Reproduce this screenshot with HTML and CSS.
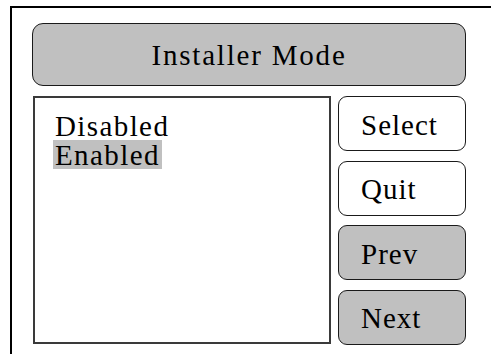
FILE: index.html
```html
<!DOCTYPE html>
<html>
<head>
<meta charset="utf-8">
<link rel="stylesheet" href="styles.css">
</head>
<body class="im-page">
<div class="im-frame">
  <div class="im-head">Installer Mode</div>
  <div class="im-row">
    <div class="im-options">
      <div class="im-opt">Disabled</div>
      <div class="im-opt"><span class="im-hl">Enabled</span></div>
    </div>
    <div class="im-keys">
      <div class="im-key">Select</div>
      <div class="im-key">Quit</div>
      <div class="im-key im-shade">Prev</div>
      <div class="im-key im-shade">Next</div>
    </div>
  </div>
</div>
</body>
</html>
```
FILE: styles.css
```css
.im-page {
  margin: 0;
  padding: 0;
  background: #fff;
  overflow: hidden;
  font: 29px "Liberation Serif", "DejaVu Serif", serif;
}
.im-frame {
  box-sizing: border-box;
  margin: 6px 0 0 10px;
  border-top: 2px solid #000;
  border-left: 2px solid #000;
  padding: 15px 0 0 20px;
  height: 348px;
  width: 481px;
}
.im-head {
  box-sizing: border-box;
  width: 434px;
  height: 63px;
  background: #c0c0c0;
  border: 1.5px solid #1a1a1a;
  border-radius: 11px;
  display: flex;
  align-items: center;
  justify-content: center;
  font: 29px "Liberation Serif", "DejaVu Serif", serif;
  letter-spacing: 1.8px;
  padding-top: 1px;
}
.im-row {
  display: flex;
  margin-top: 10px;
  width: 434px;
}
.im-options {
  box-sizing: border-box;
  width: 298px;
  height: 248px;
  margin-left: 1px;
  border: 2px solid #3a3a3a;
  padding: 15px 0 0 20px;
}
.im-opt {
  font: 29px/27px "Liberation Serif", "DejaVu Serif", serif;
  letter-spacing: 1.4px;
}
.im-hl {
  display: inline-block;
  background: #c0c0c0;
  padding: 2px 2px 0;
  margin-left: -2px;
}
.im-keys {
  margin-left: 7px;
  width: 128px;
  height: 249px;
  display: flex;
  flex-direction: column;
  justify-content: space-between;
}
.im-key {
  box-sizing: border-box;
  height: 55px;
  border: 1.5px solid #1a1a1a;
  border-radius: 9px;
  display: flex;
  align-items: center;
  padding: 3px 0 0 22px;
  font: 29px "Liberation Serif", "DejaVu Serif", serif;
  letter-spacing: 1px;
}
.im-shade {
  background: #c0c0c0;
}
```
